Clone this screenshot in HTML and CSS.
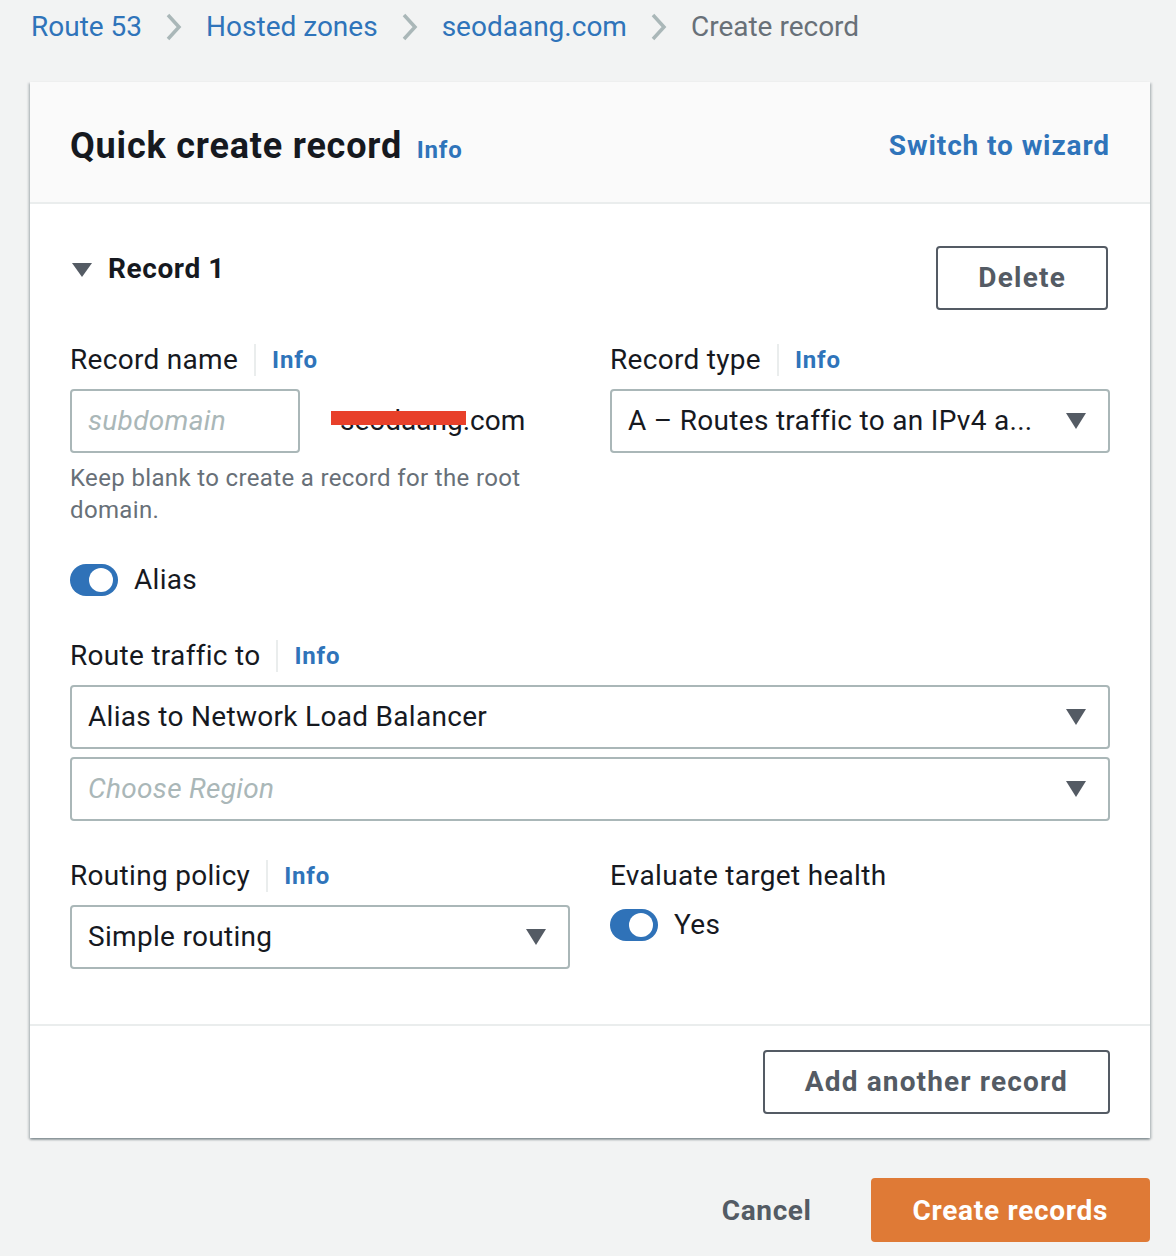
FILE: index.html
```html
<!DOCTYPE html>
<html lang="en">
<head>
<meta charset="utf-8">
<title>Create record</title>
<link rel="stylesheet" href="styles.css">
</head>
<body>
<div class="page">
  <nav class="breadcrumbs">
    <a class="crumb">Route 53</a>
    <svg class="chev" viewBox="0 0 18 30" width="18" height="30"><path d="M3 3 L14 15 L3 27" fill="none" stroke="#aab7b8" stroke-width="3.5"/></svg>
    <a class="crumb">Hosted zones</a>
    <svg class="chev" viewBox="0 0 18 30" width="18" height="30"><path d="M3 3 L14 15 L3 27" fill="none" stroke="#aab7b8" stroke-width="3.5"/></svg>
    <a class="crumb">seodaang.com</a>
    <svg class="chev" viewBox="0 0 18 30" width="18" height="30"><path d="M3 3 L14 15 L3 27" fill="none" stroke="#aab7b8" stroke-width="3.5"/></svg>
    <span class="crumb current">Create record</span>
  </nav>

  <section class="card">
    <header class="card-header">
      <h2 class="title">Quick create record <a class="info">Info</a></h2>
      <a class="switch">Switch to wizard</a>
    </header>

    <div class="card-body">
      <div class="record-head">
        <svg class="caret" viewBox="0 0 20 14" width="20" height="14"><path d="M0 0 H20 L10 14 Z" fill="#545b64"/></svg>
        <h3 class="record-title">Record 1</h3>
        <button class="btn">Delete</button>
      </div>

      <div class="two-col">
        <div class="field">
          <div class="label-row"><span class="label">Record name</span><span class="sep"></span><a class="info">Info</a></div>
          <div class="name-row">
            <div class="input"><span class="placeholder">subdomain</span></div>
            <span class="domain">seodaang.com<span class="redact"></span></span>
          </div>
          <p class="help">Keep blank to create a record for the root domain.</p>
        </div>
        <div class="field">
          <div class="label-row"><span class="label">Record type</span><span class="sep"></span><a class="info">Info</a></div>
          <div class="select"><span class="value">A – Routes traffic to an IPv4 a...</span><svg class="arrow" viewBox="0 0 20 16" width="20" height="16"><path d="M0 0 H20 L10 16 Z" fill="#545b64"/></svg></div>
        </div>
      </div>

      <div class="toggle-row alias">
        <span class="toggle"><span class="knob"></span></span>
        <span class="toggle-text">Alias</span>
      </div>

      <div class="field route">
        <div class="label-row"><span class="label">Route traffic to</span><span class="sep"></span><a class="info">Info</a></div>
        <div class="select"><span class="value">Alias to Network Load Balancer</span><svg class="arrow" viewBox="0 0 20 16" width="20" height="16"><path d="M0 0 H20 L10 16 Z" fill="#545b64"/></svg></div>
        <div class="select second"><span class="placeholder">Choose Region</span><svg class="arrow" viewBox="0 0 20 16" width="20" height="16"><path d="M0 0 H20 L10 16 Z" fill="#545b64"/></svg></div>
      </div>

      <div class="two-col policy">
        <div class="field">
          <div class="label-row"><span class="label">Routing policy</span><span class="sep"></span><a class="info">Info</a></div>
          <div class="select"><span class="value">Simple routing</span><svg class="arrow" viewBox="0 0 20 16" width="20" height="16"><path d="M0 0 H20 L10 16 Z" fill="#545b64"/></svg></div>
        </div>
        <div class="field">
          <div class="label-row"><span class="label">Evaluate target health</span></div>
          <div class="toggle-row health">
            <span class="toggle"><span class="knob"></span></span>
            <span class="toggle-text">Yes</span>
          </div>
        </div>
      </div>
    </div>

    <footer class="card-footer">
      <button class="btn wide">Add another record</button>
    </footer>
  </section>

  <div class="actions">
    <button class="btn-link">Cancel</button>
    <button class="btn-primary">Create records</button>
  </div>
</div>
</body>
</html>
```

FILE: styles.css
```css
* { box-sizing: border-box; }

html, body {
  margin: 0;
  padding: 0;
  background: #f2f3f3;
}

body {
  font-family: Roboto, "Liberation Sans", Arial, sans-serif;
  color: #16191f;
  font-size: 28px;
  line-height: 40px;
  letter-spacing: 0.3px;
}

.page {
  padding: 7px 26px 0 30px;
}

/* Breadcrumbs */
.breadcrumbs {
  display: flex;
  align-items: center;
  height: 40px;
  margin-bottom: 35px;
  padding-left: 1px;
}

.crumb {
  color: #2f74ba;
  font-size: 28px;
  line-height: 40px;
  letter-spacing: 0;
}

.crumb.current {
  color: #687078;
}

.chev {
  margin: 0 23px 0 23px;
  display: block;
}

/* Card */
.card {
  background: #fff;
  box-shadow: 0 2px 2px 0 rgba(0, 28, 36, 0.3), 2px 1px 2px 0 rgba(0, 28, 36, 0.15), -2px 1px 2px 0 rgba(0, 28, 36, 0.15);
}

.card-header {
  display: flex;
  align-items: center;
  justify-content: space-between;
  background: #fafafa;
  border-bottom: 2px solid #eaeded;
  padding: 43px 40px 31px 40px;
  height: 122px;
}

.title {
  margin: 0;
  font-size: 36px;
  font-weight: 700;
  line-height: 46px;
  letter-spacing: 0.8px;
}

.title .info {
  margin-left: 5px;
}

.info {
  color: #2f74ba;
  font-weight: 700;
  font-size: 24px;
  letter-spacing: 0.8px;
}

.switch {
  color: #2f74ba;
  font-weight: 700;
  font-size: 28px;
  line-height: 40px;
  letter-spacing: 0.9px;
  margin-top: -4px;
}

.card-body {
  padding: 42px 40px 55px 40px;
}

/* Record head */
.record-head {
  display: flex;
  align-items: flex-start;
  margin-bottom: 30px;
}

.caret {
  display: block;
  margin: 17px 16px 0 2px;
}

.record-title {
  margin: 0;
  font-size: 28px;
  font-weight: 700;
  line-height: 46px;
  letter-spacing: 0.6px;
  flex: 1;
}

.btn {
  font-family: inherit;
  font-size: 28px;
  font-weight: 700;
  color: #545b64;
  background: #fff;
  border: 2px solid #545b64;
  border-radius: 4px;
  height: 64px;
  padding: 0 40px;
  line-height: 60px;
  letter-spacing: 1.2px;
  margin-right: 2px;
}

.btn.wide {
  letter-spacing: 1.15px;
}

/* Fields */
.two-col {
  display: grid;
  grid-template-columns: 500px 500px;
  column-gap: 40px;
}

.label-row {
  display: flex;
  align-items: center;
  height: 40px;
  margin-bottom: 9px;
}

.label {
  font-size: 28px;
  line-height: 40px;
}

.sep {
  display: block;
  width: 2px;
  height: 32px;
  background: #eaeded;
  margin: 0 16px 0 16px;
}

.name-row {
  display: flex;
  align-items: center;
}

.input {
  width: 230px;
  height: 64px;
  border: 2px solid #aab7b8;
  border-radius: 4px;
  padding: 0 16px;
  display: flex;
  align-items: center;
}

.placeholder {
  color: #aab7b8;
  font-style: italic;
}

.domain {
  position: relative;
  margin-left: 40px;
  letter-spacing: 0;
}

.redact {
  position: absolute;
  left: -9px;
  top: 10px;
  width: 135px;
  height: 14px;
  background: #e8402a;
}

.help {
  margin: 9px 0 0 0;
  color: #687078;
  font-size: 24px;
  line-height: 32px;
  letter-spacing: 0.35px;
  width: 480px;
}

.select {
  height: 64px;
  border: 2px solid #aab7b8;
  border-radius: 4px;
  display: flex;
  align-items: center;
  justify-content: space-between;
  padding: 0 22px 0 16px;
}

.select .arrow {
  display: block;
  flex: none;
}

.select.second {
  margin-top: 8px;
}

/* Toggle */
.toggle-row {
  display: flex;
  align-items: center;
  height: 40px;
}

.toggle-row.alias {
  margin-top: 34px;
}

.toggle {
  position: relative;
  display: block;
  width: 48px;
  height: 32px;
  border-radius: 16px;
  background: #2f72b8;
  margin-right: 16px;
}

.knob {
  position: absolute;
  right: 5px;
  top: 4px;
  width: 24px;
  height: 24px;
  border-radius: 50%;
  background: #fff;
}

.field.route {
  margin-top: 36px;
}

.two-col.policy {
  margin-top: 35px;
}

.toggle-row.health {
  margin-top: 8px;
}

/* Footer */
.card-footer {
  border-top: 2px solid #eaeded;
  padding: 24px 40px 24px 40px;
  display: flex;
  justify-content: flex-end;
}

.card-footer .btn {
  margin-right: 0;
}

/* Actions */
.actions {
  display: flex;
  justify-content: flex-end;
  align-items: center;
  margin-top: 40px;
}

.btn-link {
  font-family: inherit;
  font-size: 28px;
  font-weight: 700;
  color: #545b64;
  background: none;
  border: none;
  height: 64px;
  padding: 0 40px;
  letter-spacing: 0.6px;
  margin-right: 19px;
}

.btn-primary {
  font-family: inherit;
  font-size: 28px;
  font-weight: 700;
  color: #fff;
  background: #df7a36;
  border: 2px solid #df7a36;
  border-radius: 4px;
  height: 64px;
  padding: 0 40px;
  letter-spacing: 0.7px;
}
```
